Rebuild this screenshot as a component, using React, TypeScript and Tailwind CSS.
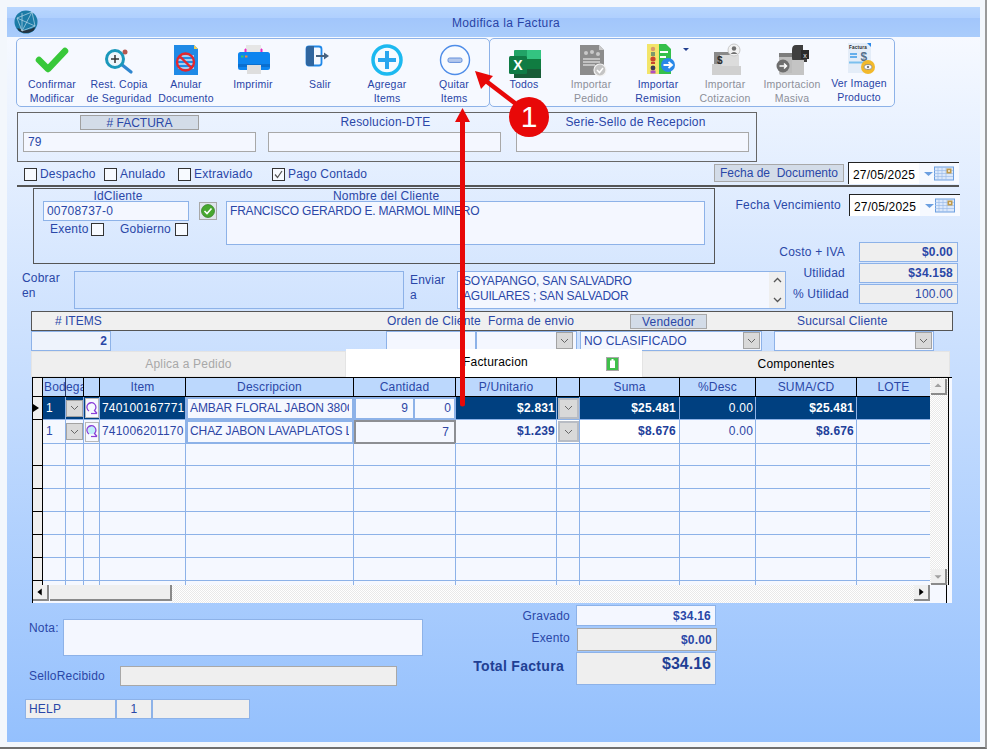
import React from 'react';

const Check: React.FC<{ checked?: boolean }> = ({ checked }) => (
  <span className="flex h-[13px] w-[13px] shrink-0 items-center justify-center border border-[#333] bg-[#f7faff]">
    {checked && (
      <svg width="11" height="11" viewBox="0 0 11 11">
        <path d="M2 5.5 L4.5 8.5 L9 2" fill="none" stroke="#555" strokeWidth="1.2" />
      </svg>
    )}
  </span>
);

const DropBtn: React.FC<{ className?: string }> = ({ className = '' }) => (
  <span className={`flex h-[17px] w-[17px] shrink-0 items-center justify-center border border-[#a3a3a3] bg-[#d9d9d9] ${className}`}>
    <svg width="9" height="6" viewBox="0 0 9 6">
      <path d="M1 1 L4.5 4.5 L8 1" fill="none" stroke="#666" strokeWidth="1" />
    </svg>
  </span>
);

const DateBox: React.FC = () => (
  <div className="flex h-[22px] w-[111px] shrink-0 border-l border-t border-[#222] bg-white">
    <span className="w-[70px] pl-[4px] pt-[5px] text-[12px] leading-[15px] tracking-[0.2px] text-black">27/05/2025</span>
    <span className="flex flex-1 items-center bg-[#f6f9ff] pl-[5px]">
      <svg width="30" height="15" viewBox="0 0 30 15">
        <path d="M0 6 H9 L4.5 10 Z" fill="#6c9fe0" />
        <rect x="10.5" y="1" width="19" height="13" fill="#dbe8fb" stroke="#6c9fe0" />
        <path d="M10 4.5 H29 M10 7.5 H29 M10 10.5 H29 M14 1 V14 M18 1 V14 M22 1 V14" stroke="#9dbdea" strokeWidth="0.7" />
        <rect x="22.5" y="2.5" width="5" height="5" fill="#c09a4a" />
        <rect x="24" y="4" width="2" height="2" fill="#eadcc0" />
      </svg>
    </span>
  </div>
);

const Logo = () => (
  <svg width="24" height="24" viewBox="0 0 24 24">
    <circle cx="12" cy="12" r="11.5" fill="#1c7ba6" />
    <path d="M3 18 Q12 24 21 18 L19 21 Q12 25 5 21 Z" fill="#20303f" />
    <path d="M4 18 Q12 23 21 17 L20 20 Q12 25 6 21 Z" fill="#263442" />
    <path d="M3 8 L18 2 L21 16 L8 21 L3 8 L21 16 M8 3 L8 21 M18 2 L8 21" fill="none" stroke="#b9d9ea" strokeWidth="0.7" />
  </svg>
);

const icons: Record<string, React.ReactNode> = {
  confirmar: <path d="M5 18 L14 27 L31 9" fill="none" stroke="#38c83a" strokeWidth="6.5" strokeLinecap="round" strokeLinejoin="round" />,
  copia: (
    <>
      <path d="M20 22 L30 30" stroke="#2f86cf" strokeWidth="3.2" strokeLinecap="round" />
      <circle cx="24" cy="10" r="2.5" fill="#b5574f" />
      <circle cx="14" cy="17" r="8.5" fill="#eef6fb" stroke="#1b98bb" strokeWidth="3" />
      <path d="M10 17 H18 M14 13 V21" stroke="#333" strokeWidth="1.5" />
    </>
  ),
  anular: (
    <>
      <path d="M6 3 H26 L30 7 V33 H6 Z" fill="#1f8ae6" />
      <path d="M26 3 L30 7 H26 Z" fill="#f3cf4f" />
      <path d="M11 14 H26 M10 18 H26 M10 22 H26 M10 26 H26" stroke="#cfe4f7" strokeWidth="1.6" />
      <circle cx="17.5" cy="20" r="8.5" fill="none" stroke="#e3262e" strokeWidth="2.4" />
      <path d="M11.5 14 L23.5 26" stroke="#e3262e" strokeWidth="2.4" />
    </>
  ),
  imprimir: (
    <>
      <rect x="11" y="3" width="15" height="9" fill="#e6e6e6" />
      <path d="M10 7 H11 V11 H10 Z M26 7 H27 V11 H26 Z" fill="#e829c2" stroke="#e829c2" />
      <rect x="3" y="10" width="32" height="18" rx="2.5" fill="#0d85ef" />
      <rect x="3" y="22" width="32" height="3" fill="#0a6fcf" />
      <rect x="6" y="13.5" width="2.5" height="2" fill="#35c96b" />
      <rect x="10" y="13.5" width="2.5" height="2" fill="#f08a3c" />
      <rect x="12" y="23" width="14" height="9" fill="#dedede" />
    </>
  ),
  salir: (
    <>
      <rect x="4.5" y="4.5" width="15" height="19" rx="2.5" fill="#f4f8ff" stroke="#1f88e8" strokeWidth="1.8" />
      <path d="M4 7 Q4 4 7 4 H12 V24 H7 Q4 24 4 21 Z" fill="#30669f" />
      <path d="M14 14 H23" stroke="#47627f" strokeWidth="2" />
      <path d="M22 10.5 L27 14 L22 17.5 Z" fill="#47627f" />
    </>
  ),
  agregar: (
    <>
      <circle cx="18" cy="18" r="14" fill="#f6fbff" stroke="#1cb9f0" strokeWidth="3.5" />
      <path d="M9 18 H27 M18 9 V27" stroke="#29a6ee" strokeWidth="4" />
    </>
  ),
  quitar: (
    <>
      <circle cx="19" cy="18" r="14.5" fill="#f8fbff" stroke="#4f8de8" strokeWidth="1.4" />
      <rect x="12" y="16" width="14" height="4.4" rx="1.6" fill="#b4c8ec" stroke="#6490dc" />
    </>
  ),
  todos: (
    <>
      <rect x="8" y="8" width="27" height="28" rx="1" fill="#21a366" />
      <rect x="21" y="8" width="14" height="9" fill="#33c481" />
      <rect x="21" y="17" width="14" height="10" fill="#107c41" />
      <rect x="21" y="27" width="14" height="9" fill="#185c37" />
      <rect x="8" y="27" width="13" height="9" fill="#185c37" />
      <rect x="3" y="14" width="18" height="18" rx="1.5" fill="#0f7b45" />
      <text x="12" y="28" textAnchor="middle" fontSize="14" fontWeight="700" fill="#fff" fontFamily="Liberation Sans">X</text>
    </>
  ),
  pedido: (
    <>
      <path d="M7 3 H26 L31 8 V33 H7 Z" fill="#8c8c8c" />
      <path d="M26 3 L31 8 H26 Z" fill="#c9c9c9" />
      <circle cx="13" cy="11" r="2" fill="#c9c9c9" />
      <circle cx="19" cy="10" r="2" fill="#c9c9c9" />
      <circle cx="25" cy="12" r="2" fill="#c9c9c9" />
      <path d="M10 17 H27 M10 20 H27 M10 23 H22" stroke="#d4d4d4" strokeWidth="1.3" />
      <circle cx="27" cy="28" r="6" fill="#c4c4c4" stroke="#f2f2f2" strokeWidth="1.2" />
      <path d="M24 28 L26.5 30.5 L30 26" fill="none" stroke="#fff" strokeWidth="1.5" />
    </>
  ),
  remision: (
    <>
      <rect x="7" y="2" width="12" height="30" fill="#f3e56a" />
      <circle cx="13" cy="7" r="2.2" fill="#d99a6b" />
      <rect x="11" y="10" width="4" height="4" fill="#7c9a6b" />
      <circle cx="13" cy="17" r="2.6" fill="#c8452f" />
      <rect x="11" y="20" width="4" height="2" fill="#c8452f" />
      <circle cx="13" cy="26" r="2.4" fill="#3d3a55" />
      <rect x="10.5" y="28.5" width="5" height="3" fill="#b04fc0" />
      <path d="M19 2 H26 L31 7 V32 H19 Z" fill="#35c04b" />
      <path d="M20 10 H28 M20 15 H26" stroke="#fff" strokeWidth="2" />
      <circle cx="28" cy="23" r="7" fill="#2a88e8" />
      <path d="M23.5 23 H31 M28.5 20 L32 23 L28.5 26" fill="none" stroke="#fff" strokeWidth="1.8" />
    </>
  ),
  cotizacion: (
    <>
      <path d="M7 10 H28 V24 H7 Z" fill="#8a8a8a" />
      <path d="M13 13 H32 V24 H13 Z" fill="#dcdcdc" />
      <text x="10" y="22" fontSize="10" fontWeight="700" fill="#2a2a2a" fontFamily="Liberation Sans">$</text>
      <path d="M5 22 H13 L15 24 H34 V33 H5 Z" fill="#d0d0d0" />
      <circle cx="27" cy="8" r="6" fill="#f2f2f2" stroke="#c9c9c9" />
      <circle cx="27" cy="6.5" r="2.2" fill="#6f6f6f" />
      <path d="M23.5 12 Q27 8 30.5 12 Z" fill="#6f6f6f" />
    </>
  ),
  masiva: (
    <>
      <path d="M5 13 Q5 11 7 11 H25 V33 H7 Q5 33 5 31 Z" fill="#bdbdbd" />
      <rect x="5" y="11" width="20" height="4" fill="#7d7d7d" />
      <path d="M18 8 Q18 3 22 3 H29 V8 H33 V20 H22 Q18 20 18 16 Z" fill="#3f3f3f" />
      <rect x="27" y="8" width="8" height="9" fill="#2a2a2a" />
      <text x="31" y="15.5" textAnchor="middle" fontSize="7" fill="#e6e6e6" fontFamily="Liberation Sans">x</text>
      <path d="M18 18 H30 V33 H7 V31 H18 Z" fill="#c4c4c4" />
      <circle cx="9" cy="24" r="6.5" fill="#6e6e6e" />
      <path d="M5.5 24 H12.5 M10 21.5 L12.5 24 L10 26.5" fill="none" stroke="#fff" strokeWidth="1.5" />
    </>
  ),
  ver: (
    <>
      <rect x="7" y="1" width="23" height="30" fill="#e4edf8" />
      <text x="8" y="6.5" fontSize="4.6" fontWeight="700" fill="#2a2a2a" fontFamily="Liberation Sans">Factura</text>
      <path d="M26 1 H30 V5 Z" fill="#2a88e8" />
      <path d="M9 12 H16 M9 15 H16" stroke="#3d9be8" strokeWidth="1.5" />
      <text x="23" y="19" textAnchor="middle" fontSize="12" fontWeight="700" fill="#54708c" fontFamily="Liberation Sans">$</text>
      <path d="M8 20.5 H24" stroke="#7cc0ee" strokeWidth="2" />
      <circle cx="27" cy="25" r="7" fill="#f2b92c" />
      <ellipse cx="27" cy="25" rx="4" ry="2.6" fill="#fff" stroke="#7a7a7a" strokeWidth="0.7" />
      <circle cx="27" cy="25" r="1.2" fill="#7a7a7a" />
    </>
  ),
};

const ToolBtn: React.FC<{ icon: string; lines: string[]; muted?: boolean; raised?: boolean; caret?: boolean }> = ({ icon, lines, muted, raised, caret }) => (
  <div className="relative flex w-[67px] shrink-0 flex-col items-center pt-[3px]">
    <svg width="36" height="36" viewBox="0 0 36 36" className="overflow-visible">
      {icons[icon]}
    </svg>
    {caret && <span className="absolute left-[58px] top-[9px] h-0 w-0 border-x-[3px] border-t-[3px] border-x-transparent border-t-[#223f8f]" />}
    <div className={`${raised ? '-mt-[2px]' : '-mt-[1px]'} text-center text-[10.5px] leading-[14px] tracking-[0.2px] whitespace-nowrap ${muted ? 'text-[#8d8f99]' : 'text-[#2844a6]'}`}>
      {lines.map((l) => (
        <div key={l}>{l}</div>
      ))}
    </div>
  </div>
);

const inputBlue = 'border border-[#8db2e8] bg-[#f4f7ff]';
const inputGray = 'border border-[#a8a8a8] bg-[#f4f7ff]';
const cellLine = 'border-b border-r border-[#8db2e8]';

const heads: [string, string][] = [
  ['', 'bg-[#efefef] border-r border-black'],
  ['Bod', 'justify-start pl-[1px] border-r border-[#2a3a66] overflow-hidden'],
  ['ega', 'justify-start border-r border-black overflow-hidden'],
  ['', 'border-r border-black'],
  ['Item', 'border-r border-black'],
  ['Descripcion', 'border-r border-black'],
  ['Cantidad', 'border-r border-black'],
  ['P/Unitario', 'border-r border-black'],
  ['', 'border-r border-black'],
  ['Suma', 'border-r border-black'],
  ['%Desc', 'border-r border-black'],
  ['SUMA/CD', 'border-r border-black'],
  ['LOTE', ''],
];

const gridCols = 'grid grid-cols-[10px_23px_18px_16px_86px_168px_102px_101px_23px_100px_76px_101px_73px]';

const Lens: React.FC<{ tint: string }> = ({ tint }) => (
  <span className="flex h-[20px] w-[14px] items-center justify-center border border-[#b8b8b8] bg-[#f6f8ff]">
    <svg width="12" height="17" viewBox="0 0 12 17">
      <circle cx="5.5" cy="7" r="4" fill={tint} />
      <path d="M3 11 A4.5 4.5 0 1 1 8.5 10.5 L11 13.5" fill="none" stroke="#8a3fd8" strokeWidth="1.3" />
      <path d="M5 13.5 H11" stroke="#8a3fd8" strokeWidth="1.2" />
    </svg>
  </span>
);

const Row: React.FC<{ sel?: boolean; item: string; desc: string; unit: string; suma: string; first: React.ReactNode }> = ({ sel, item, desc, unit, suma, first }) => {
  const c = sel ? 'bg-[#004080] text-white' : 'bg-[#f5f8ff] text-[#2d46a5]';
  const bold = sel ? 'bg-[#004080] text-white font-bold' : 'text-[#22409a] font-bold';
  return (
    <div className={`${gridCols} h-[23px] text-[12px] leading-[22px] tracking-[0.2px]`}>
      <div className="flex items-center border-b border-r border-black bg-[#efefef]">
        {sel && <span className="h-0 w-0 border-y-[4px] border-l-[6px] border-y-transparent border-l-black" />}
      </div>
      <div className={`${cellLine} ${c} pl-[3px]`}>1</div>
      <div className={`${cellLine} ${c} flex items-center justify-center`}>
        <DropBtn />
      </div>
      <div className={`${cellLine} flex items-center justify-center ${sel ? 'bg-[#004080]' : 'bg-[#f5f8ff]'}`}>
        <Lens tint={sel ? '#f6f8ff' : '#bfeefa'} />
      </div>
      <div className={`${cellLine} ${c} overflow-hidden whitespace-nowrap pl-[2px]`}>{item}</div>
      <div className="overflow-hidden whitespace-nowrap border-2 border-[#8db2e8] bg-[#f5f8ff] pl-[2px] pr-[3px] leading-[18px] tracking-[-0.1px] text-[#2d46a5]">
        <div className="overflow-hidden">{desc}</div>
      </div>
      {first}
      <div className={`${cellLine} ${bold} pr-[1px] text-right`}>{unit}</div>
      <div className={`${cellLine} flex items-center justify-center ${sel ? 'bg-[#004080]' : 'bg-white'}`}>
        <span className="border-2 border-[#b8bcc4]">
          <DropBtn className="border-0" />
        </span>
      </div>
      <div className={`${cellLine} ${sel ? bold : 'bg-white font-bold text-[#22409a]'} pr-[3px] text-right`}>{suma}</div>
      <div className={`${cellLine} ${c} pr-[2px] text-right`}>0.00</div>
      <div className={`${cellLine} ${bold} pr-[2px] text-right`}>{suma}</div>
      <div className={`border-b border-[#8db2e8] ${c}`} />
    </div>
  );
};

const EmptyRow: React.FC<{ tall?: boolean }> = ({ tall }) => (
  <div className={`${gridCols} ${tall ? 'h-[4px]' : 'h-[23px]'}`}>
    <div className={`${tall ? '' : 'border-b border-black'} border-r border-black bg-[#efefef]`} />
    {Array.from({ length: 12 }).map((_, i) => (
      <div key={i} className={`${tall ? '' : 'border-b'} ${i < 11 ? 'border-r' : ''} border-[#8db2e8]`} />
    ))}
  </div>
);

const ScrollBtn: React.FC<{ dir: 'up' | 'down' | 'left' | 'right' }> = ({ dir }) => {
  const d = { up: 'M4 9 H12 L8 5 Z', down: 'M4 7 H12 L8 11 Z', left: 'M10 4 V12 L5 8 Z', right: 'M6 4 V12 L11 8 Z' }[dir];
  const fill = dir === 'up' || dir === 'down' ? '#a0a0a0' : '#000';
  return (
    <span className="flex h-[16px] w-[16px] shrink-0 items-center justify-center border-b-2 border-r-2 border-b-[#8a8a8a] border-r-[#8a8a8a] bg-[#efefef]">
      <svg width="16" height="16" viewBox="0 0 16 16">
        <path d={d} fill={fill} />
      </svg>
    </span>
  );
};

const track = 'bg-[#f4f4f4] bg-[repeating-conic-gradient(#e9e9e9_0_25%,#ffffff_0_50%)] bg-[length:2px_2px]';

export default function App() {
  return (
    <div className="relative h-[749px] w-[987px] overflow-hidden border-b-2 border-r-2 border-b-[#707070] border-r-[#9a9a9a] bg-[#f3f7fc] pl-[7px] pt-[7px] font-['Liberation_Sans',Arial,sans-serif] text-[12px] tracking-[0.2px] text-[#2a47a7]">
      <div className="flex h-[735px] w-[973px] flex-col">
        <div className="flex h-[30px] shrink-0 items-center bg-[linear-gradient(#b9d7fe_0%,#b0d0fe_35%,#a2c6fb_38%,#a9ccfb_100%)] pl-[7px]">
          <Logo />
          <div className="flex-1 pr-[6px] pt-[1px] text-center text-[12px] tracking-[0.35px] text-[#2844a6]">Modifica la Factura</div>
        </div>

        <div className="flex flex-1 flex-col bg-[linear-gradient(#f6f9ff,#94c0fd)]">
          {/* toolbar */}
          <div className="ml-[9px] mt-[1px] flex h-[69px] shrink-0">
            <div className="flex w-[474px] rounded-[5px] border border-[#8db2e8] bg-[#f6f9ff] px-[1.5px]">
              <ToolBtn icon="confirmar" lines={['Confirmar', 'Modificar']} />
              <ToolBtn icon="copia" lines={['Rest. Copia', 'de Seguridad']} />
              <ToolBtn icon="anular" lines={['Anular', 'Documento']} />
              <ToolBtn icon="imprimir" lines={['Imprimir']} />
              <ToolBtn icon="salir" lines={['Salir']} />
              <ToolBtn icon="agregar" lines={['Agregar', 'Items']} />
              <ToolBtn icon="quitar" lines={['Quitar', 'Items']} />
            </div>
            <div className="-ml-px flex w-[406px] rounded-[5px] border border-[#8db2e8] bg-[#f6f9ff] px-[0.5px]">
              <ToolBtn icon="todos" lines={['Todos']} />
              <ToolBtn icon="pedido" lines={['Importar', 'Pedido']} muted />
              <ToolBtn icon="remision" lines={['Importar', 'Remision']} caret />
              <ToolBtn icon="cotizacion" lines={['Importar', 'Cotizacion']} muted />
              <ToolBtn icon="masiva" lines={['Importacion', 'Masiva']} muted />
              <ToolBtn icon="ver" lines={['Ver Imagen', 'Producto']} raised />
            </div>
          </div>

          {/* factura */}
          <div className="ml-[10px] mt-[5px] flex h-[50px] w-[740px] shrink-0 border border-[#666] pl-[5px]">
            <div className="flex w-[233px] flex-col items-center pt-[2px]">
              <div className="h-[15px] w-[119px] border border-[#a0a0a0] bg-[#d3dce8] text-center leading-[14px] tracking-normal"># FACTURA</div>
              <div className={`mt-[2px] h-[20px] w-full ${inputGray} pl-[4px] leading-[19px]`}>79</div>
            </div>
            <div className="ml-[12px] flex w-[233px] flex-col items-center pt-[2px]">
              <div className="h-[15px] pl-[2px] leading-[15px]">Resolucion-DTE</div>
              <div className={`mt-[2px] h-[20px] w-full ${inputGray}`} />
            </div>
            <div className="ml-[15px] flex w-[233px] flex-col items-center pt-[2px]">
              <div className="h-[15px] pl-[6px] leading-[15px]">Serie-Sello de Recepcion</div>
              <div className={`mt-[2px] h-[20px] w-full ${inputGray}`} />
            </div>
          </div>

          {/* checks */}
          <div className="ml-[10px] flex h-[25px] w-[942px] shrink-0 items-start border-b-2 border-[#555] pl-[7px]">
            <div className="flex w-[80px] items-center gap-[3px] pt-[6px] leading-[13px]"><Check />Despacho</div>
            <div className="flex w-[74px] items-center gap-[3px] pt-[6px] leading-[13px]"><Check />Anulado</div>
            <div className="flex w-[94px] items-center gap-[3px] pt-[6px] leading-[13px]"><Check />Extraviado</div>
            <div className="flex items-center gap-[3px] pt-[6px] leading-[13px]"><Check checked />Pago Contado</div>
            <div className="ml-auto mt-[2px] h-[18px] w-[130px] whitespace-pre border border-[#a8a8a8] bg-[#d3dce8] text-center leading-[17px] tracking-normal">Fecha de  Documento</div>
            <div className="ml-[4px]"><DateBox /></div>
          </div>

          {/* cliente */}
          <div className="ml-[10px] mt-px flex w-[943px] shrink-0">
            <div className="w-[769px] shrink-0">
              <div className="ml-[16px] flex h-[76px] w-[682px] border border-[#555] pl-[9px]">
                <div className="w-[146px]">
                  <div className="h-[12px] pl-[4px] text-center leading-[15px]">IdCliente</div>
                  <div className={`h-[20px] ${inputBlue} pl-[3px] leading-[19px]`}>00708737-0</div>
                  <div className="mt-[2px] flex items-center pl-[7px] leading-[13px]">
                    <span className="w-[41px]">Exento</span>
                    <Check />
                    <span className="ml-[16px] w-[55px]">Gobierno</span>
                    <Check />
                  </div>
                </div>
                <span className="ml-[10px] mt-[13px] flex h-[18px] w-[18px] items-center justify-center border border-[#a8a8a8] bg-[#dfe5ec]">
                  <svg width="14" height="14" viewBox="0 0 14 14">
                    <circle cx="7" cy="7" r="6.5" fill="#47a82f" stroke="#2f7a1e" strokeWidth="0.7" />
                    <path d="M3.5 7 L6 9.5 L10.5 4.5" fill="none" stroke="#fff" strokeWidth="1.6" />
                  </svg>
                </span>
                <div className="ml-[9px] w-[479px]">
                  <div className="h-[12px] pl-[107px] leading-[15px]">Nombre del Cliente</div>
                  <div className={`h-[44px] ${inputBlue} pl-[3px] leading-[19px] tracking-[-0.2px]`}>FRANCISCO GERARDO E. MARMOL MINERO</div>
                </div>
              </div>
              <div className="mt-[7px] flex h-[38px] pl-[5px]">
                <div className="w-[52px] leading-[15px]">Cobrar<br />en</div>
                <div className="w-[330px] border border-[#8db2e8]" />
                <div className="ml-[6px] w-[47px] pt-[2px] leading-[15px]">Enviar<br />a</div>
                <div className={`flex w-[329px] ${inputBlue} leading-[15px]`}>
                  <div className="flex-1 whitespace-nowrap pl-[5px] pt-[2px] tracking-[-0.2px]">SOYAPANGO, SAN SALVADRO<br />AGUILARES ; SAN SALVADOR</div>
                  <div className="flex w-[16px] flex-col items-center justify-between bg-[#efefef] py-[5px]">
                    <svg width="9" height="6" viewBox="0 0 9 6"><path d="M1 5 L4.5 1.5 L8 5" fill="none" stroke="#555" strokeWidth="1.3" /></svg>
                    <svg width="9" height="6" viewBox="0 0 9 6"><path d="M1 1 L4.5 4.5 L8 1" fill="none" stroke="#555" strokeWidth="1.3" /></svg>
                  </div>
                </div>
              </div>
            </div>
            <div className="w-[174px] shrink-0 pt-[6px]">
              <div className="flex h-[22px] items-center justify-end gap-[8px] whitespace-nowrap">
                <span>Fecha Vencimiento</span>
                <DateBox />
              </div>
              <div className="mt-[26px] flex flex-col gap-px pr-[2px]">
                <div className="flex h-[20px] items-center justify-end">
                  <span className="mr-[14px] whitespace-nowrap pb-[1px]">Costo + IVA</span>
                  <span className="h-[20px] w-[99px] shrink-0 border border-[#8db2e8] bg-[#efefef] pr-[4px] text-right font-bold leading-[19px]">$0.00</span>
                </div>
                <div className="flex h-[20px] items-center justify-end">
                  <span className="mr-[14px] whitespace-nowrap pb-[1px]">Utilidad</span>
                  <span className="h-[20px] w-[99px] shrink-0 border border-[#8db2e8] bg-[#efefef] pr-[4px] text-right font-bold leading-[19px]">$34.158</span>
                </div>
                <div className="flex h-[20px] items-center justify-end">
                  <span className="mr-[10px] whitespace-nowrap pb-[1px]">% Utilidad</span>
                  <span className="h-[20px] w-[99px] shrink-0 border border-[#8db2e8] bg-[#efefef] pr-[4px] text-right leading-[19px]">100.00</span>
                </div>
              </div>
            </div>
          </div>

          {/* items header */}
          <div className="ml-[24px] mt-[2px] flex h-[20px] w-[922px] shrink-0 items-start border border-[#555] bg-[#f0f0f0] leading-[19px]">
            <div className="w-[355px] pl-[23px] tracking-normal"># ITEMS</div>
            <div className="w-[101px] whitespace-nowrap">Orden de Cliente</div>
            <div className="w-[142px] whitespace-nowrap">Forma de envio</div>
            <div className="mt-[2px] h-[15px] w-[77px] border border-[#a8a8a8] bg-[#d3dce8] text-center leading-[14px]">Vendedor</div>
            <div className="ml-[90px] whitespace-nowrap">Sucursal Cliente</div>
          </div>
          <div className="ml-[24px] flex h-[20px] shrink-0">
            <div className="h-[20px] w-[80px] border border-[#8db2e8] bg-[#eef3fc] pr-[3px] text-right font-bold leading-[19px]">2</div>
            <div className={`ml-[275px] h-[20px] w-[90px] ${inputBlue}`} />
            <div className={`flex h-[20px] w-[101px] justify-end ${inputBlue} pr-[3px]`}><DropBtn /></div>
            <div className={`ml-[3px] flex h-[20px] w-[182px] justify-between ${inputBlue} pl-[3px] pr-[1px] leading-[18px] tracking-[0.1px]`}>NO CLASIFICADO<DropBtn /></div>
            <div className={`ml-[12px] flex h-[20px] w-[160px] justify-end ${inputBlue} pr-px`}><DropBtn /></div>
          </div>

          {/* tabs */}
          <div className="-mt-px ml-[24px] flex h-[27px] w-[919px] shrink-0 items-end">
            <div className="h-[26px] w-[315px] border border-[#e4e4e4] bg-[#efefef] pt-[5px] text-center leading-[15px] text-[#a8a8a8]">Aplica a Pedido</div>
            <div className="relative z-10 flex h-[28px] w-[296px] items-start bg-white pl-[117px] pt-[6px] leading-[15px] text-black">
              Facturacion
              <svg width="13" height="14" viewBox="0 0 13 14" className="ml-[78px] mt-[2px]">
                <rect x="0.5" y="0.5" width="12" height="13" fill="#3fc04a" stroke="#a8a8a8" />
                <rect x="4" y="3.5" width="5" height="7.5" fill="#fff" />
                <rect x="5.5" y="2" width="2" height="2" fill="#fff" />
              </svg>
            </div>
            <div className="h-[26px] flex-1 border border-[#e4e4e4] bg-[#efefef] pt-[5px] text-center leading-[15px] text-black">Componentes</div>
          </div>

          {/* grid */}
          <div className="ml-[25px] flex h-[226px] w-[920px] shrink-0 flex-col border-l border-t border-black bg-[#f5f8ff]">
            <div className="flex h-[207px] shrink-0">
              <div className="w-[897px] shrink-0">
                <div className={`${gridCols} h-[19px] border-b border-black bg-[#bcd8fd] leading-[18px]`}>
                  {heads.map(([t, cls], i) => (
                    <div key={i} className={`flex justify-center ${cls}`}>{t}</div>
                  ))}
                </div>
                <Row
                  sel
                  item="740100167771"
                  desc="AMBAR FLORAL JABON 380GR"
                  unit="$2.831"
                  suma="$25.481"
                  first={
                    <div className="flex gap-[2px] border-2 border-[#8db2e8] bg-[#8db2e8] text-[#2d46a5]">
                      <div className="w-[57px] bg-[#f5f8ff] pr-[5px] text-right leading-[18px]">9</div>
                      <div className="flex-1 bg-[#f5f8ff] pr-[3px] text-right leading-[18px]">0</div>
                    </div>
                  }
                />
                <Row
                  item="741006201170"
                  desc="CHAZ JABON LAVAPLATOS LIMON"
                  unit="$1.239"
                  suma="$8.676"
                  first={<div className="border-2 border-[#8d8f94] bg-[#f5f8ff] pr-[5px] text-right leading-[20px] text-[#2d46a5]">7</div>}
                />
                {Array.from({ length: 6 }).map((_, i) => (
                  <EmptyRow key={i} />
                ))}
                <EmptyRow tall />
              </div>
              <div className={`flex w-[19px] shrink-0 flex-col justify-between border-r border-black ${track} pl-px pt-px`}>
                <ScrollBtn dir="up" />
                <ScrollBtn dir="down" />
              </div>
            </div>
            <div className="flex h-[18px] shrink-0">
              <ScrollBtn dir="left" />
              <span className="ml-px h-[16px] w-[122px] border-b-2 border-r-2 border-b-[#8a8a8a] border-r-[#8a8a8a] bg-[#efefef]" />
              <div className={`h-full w-[742px] ${track}`} />
              <ScrollBtn dir="right" />
              <div className="ml-px h-full w-[16px] border-r border-black" />
            </div>
          </div>

          {/* pie */}
          <div className="flex flex-1">
            <div className="ml-[18px] w-[450px] shrink-0 pt-[16px]">
              <div className="flex pl-[4px]">
                <div className="w-[34px] pt-[2px] leading-[15px]">Nota:</div>
                <div className={`h-[37px] w-[360px] ${inputBlue}`} />
              </div>
              <div className="mt-[10px] flex pl-[4px]">
                <div className="w-[91px] leading-[21px]">SelloRecibido</div>
                <div className="h-[20px] w-[277px] border border-[#a8a8a8] bg-[#efefef]" />
              </div>
              <div className="mt-[12px] flex h-[20px]">
                <div className="w-[91px] border border-[#8db2e8] bg-[#efefef] pl-[3px] leading-[18px]">HELP</div>
                <div className="w-[36px] border border-[#8db2e8] bg-[#efefef] text-center leading-[18px]">1</div>
                <div className="w-[98px] border border-[#8db2e8] bg-[#efefef]" />
              </div>
            </div>
            <div className="pt-[2px]">
              <div className="flex h-[21px]">
                <div className="w-[95px] text-right leading-[22px]">Gravado</div>
                <div className={`ml-[6px] w-[140px] ${inputBlue} pr-[4px] text-right font-bold leading-[20px]`}>$34.16</div>
              </div>
              <div className="mt-[2px] flex h-[23px]">
                <div className="w-[95px] text-right leading-[21px]">Exento</div>
                <div className="ml-[7px] w-[140px] border border-[#a8a8a8] bg-[#efefef] pr-[4px] text-right font-bold leading-[23px]">$0.00</div>
              </div>
              <div className="mt-px flex h-[33px]">
                <div className="w-[89px] whitespace-nowrap text-right text-[14px] font-bold leading-[28px] tracking-[0.3px] text-[#1f3f94] [direction:rtl]">Total Factura</div>
                <div className="ml-[12px] w-[140px] border border-[#8db2e8] bg-[#efefef] pr-[4px] text-right text-[16px] font-bold leading-[22px] tracking-normal text-[#1f3f94]">$34.16</div>
              </div>
            </div>
          </div>
        </div>
      </div>

      {/* anotaciones */}
      <svg width="987" height="749" viewBox="0 0 987 749" className="pointer-events-none absolute left-0 top-0 z-20">
        <path d="M462.5 404 V118" stroke="#e80808" strokeWidth="5" strokeLinecap="round" />
        <path d="M455 122 L470 122 L462.5 108 Z" fill="#e80808" />
        <path d="M524 110 L482 78" stroke="#e80808" strokeWidth="4.5" />
        <path d="M475 71 L493 76 L481 89 Z" fill="#e80808" />
      </svg>
      <div className="absolute left-[509px] top-[97px] z-20 flex h-[40px] w-[40px] items-center justify-center rounded-full bg-[#e80808] text-[30px] leading-[30px] tracking-normal text-white">1</div>
    </div>
  );
}
